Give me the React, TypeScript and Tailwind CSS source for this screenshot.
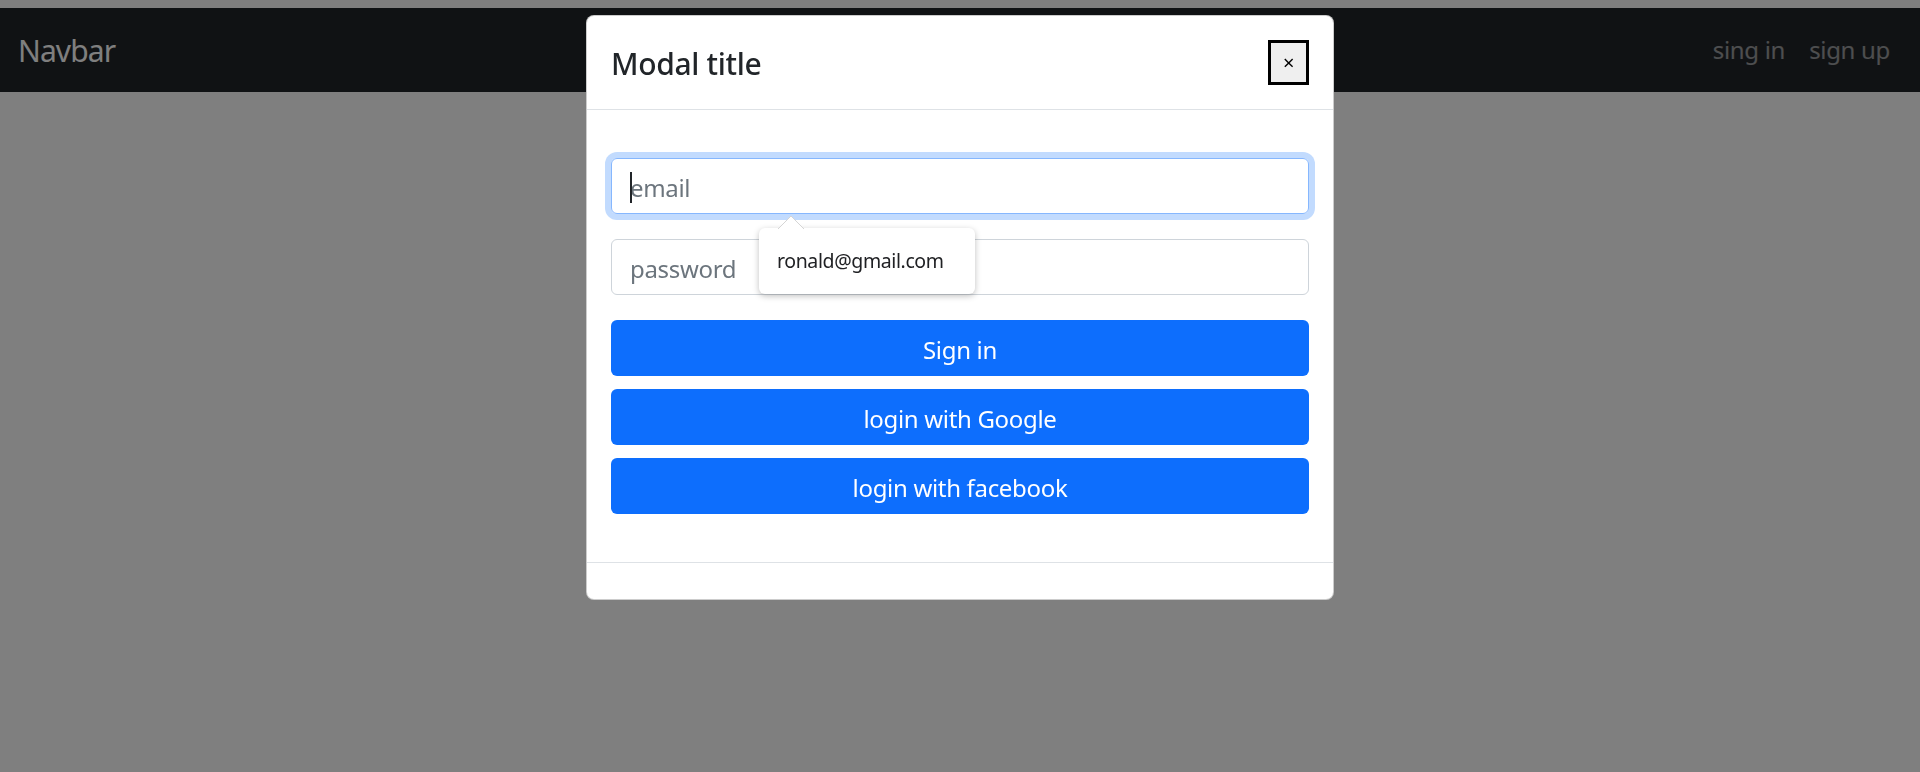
import React from "react";

const font = { fontFamily: '"Noto Sans", "Open Sans", sans-serif' };

const Navbar = () => {
  return (
    <nav className="mt-2 flex h-[84px] items-center justify-between bg-[#212529] px-[18px]">
      <a className="text-[30px] leading-[45px] tracking-[-0.03em] text-white">Navbar</a>
      <ul className="flex tracking-[-0.02em]">
        <li>
          <a className="block px-3 text-[24px] leading-[36px] text-white/55">sing in</a>
        </li>
        <li>
          <a className="block px-3 text-[24px] leading-[36px] text-white/55">sign up</a>
        </li>
      </ul>
    </nav>
  );
};

const AutofillPopup = () => {
  return (
    <div className="absolute left-[172px] top-[118px] z-10">
      {/* arrow */}
      <svg
        className="absolute -top-[13px] left-[18px]"
        width="28"
        height="14"
        viewBox="0 0 28 14"
      >
        <path d="M1 14 L14 1 L27 14" fill="#fff" stroke="#d5d5d5" strokeWidth="1" />
      </svg>
      <div className="flex h-[66px] w-[216px] items-center rounded-md bg-white px-[18px] shadow-[0_2px_6px_rgba(0,0,0,0.25)]">
        <span className="text-[19.5px] tracking-[-0.02em] text-[#202124]">ronald@gmail.com</span>
      </div>
    </div>
  );
};

const LoginModal = () => {
  return (
    <div className="mx-auto mt-[15px] w-[748px] rounded-lg border border-black/20 bg-white tracking-[-0.02em]">
      {/* Header */}
      <div className="flex h-[94px] items-center justify-between border-b border-[#dee2e6] px-6">
        <h5 className="relative top-[1px] text-[30px] font-medium leading-[45px] text-[#212529]">Modal title</h5>
        <button className="flex h-[45px] w-[41px] items-center justify-center border-[3px] border-black bg-[#efefef] text-[20px] leading-none text-black">
          ×
        </button>
      </div>

      {/* Body */}
      <div className="relative px-6 pt-[48px] pb-[48px]">
        <div className="relative mb-[25px]">
          <input
            type="email"
            placeholder="email"
            className="block h-[56px] w-full rounded-md border border-[#86b7fe] px-[18px] pt-[2px] text-[24px] text-[#212529] shadow-[0_0_0_6px_rgba(13,110,253,0.25)] outline-none placeholder:text-[#6c757d]"
          />
          <span className="absolute left-[19px] top-[14px] h-[31px] w-[2px] bg-[#212529]" />
        </div>
        <input
          type="password"
          placeholder="password"
          className="mb-[25px] block h-[56px] w-full rounded-md border border-[#ced4da] px-[18px] pt-[2px] text-[24px] outline-none placeholder:text-[#6c757d]"
        />
        <AutofillPopup />
        <div className="flex flex-col gap-[13px]">
          <button className="h-[56px] w-full rounded-md bg-[#0d6efd] pt-[3px] text-[24px] text-white">Sign in</button>
          <button className="h-[56px] w-full rounded-md bg-[#0d6efd] pt-[3px] text-[24px] text-white">login with Google</button>
          <button className="h-[56px] w-full rounded-md bg-[#0d6efd] pt-[3px] text-[24px] text-white">login with facebook</button>
        </div>
      </div>

      {/* Footer */}
      <div className="h-[37px] border-t border-[#dee2e6]" />
    </div>
  );
};

export default function App() {
  return (
    <div className="min-h-screen bg-white" style={font}>
      <Navbar />
      <div className="fixed inset-0 bg-black/50" />
      <div className="fixed inset-0 overflow-y-auto">
        <LoginModal />
      </div>
    </div>
  );
}
